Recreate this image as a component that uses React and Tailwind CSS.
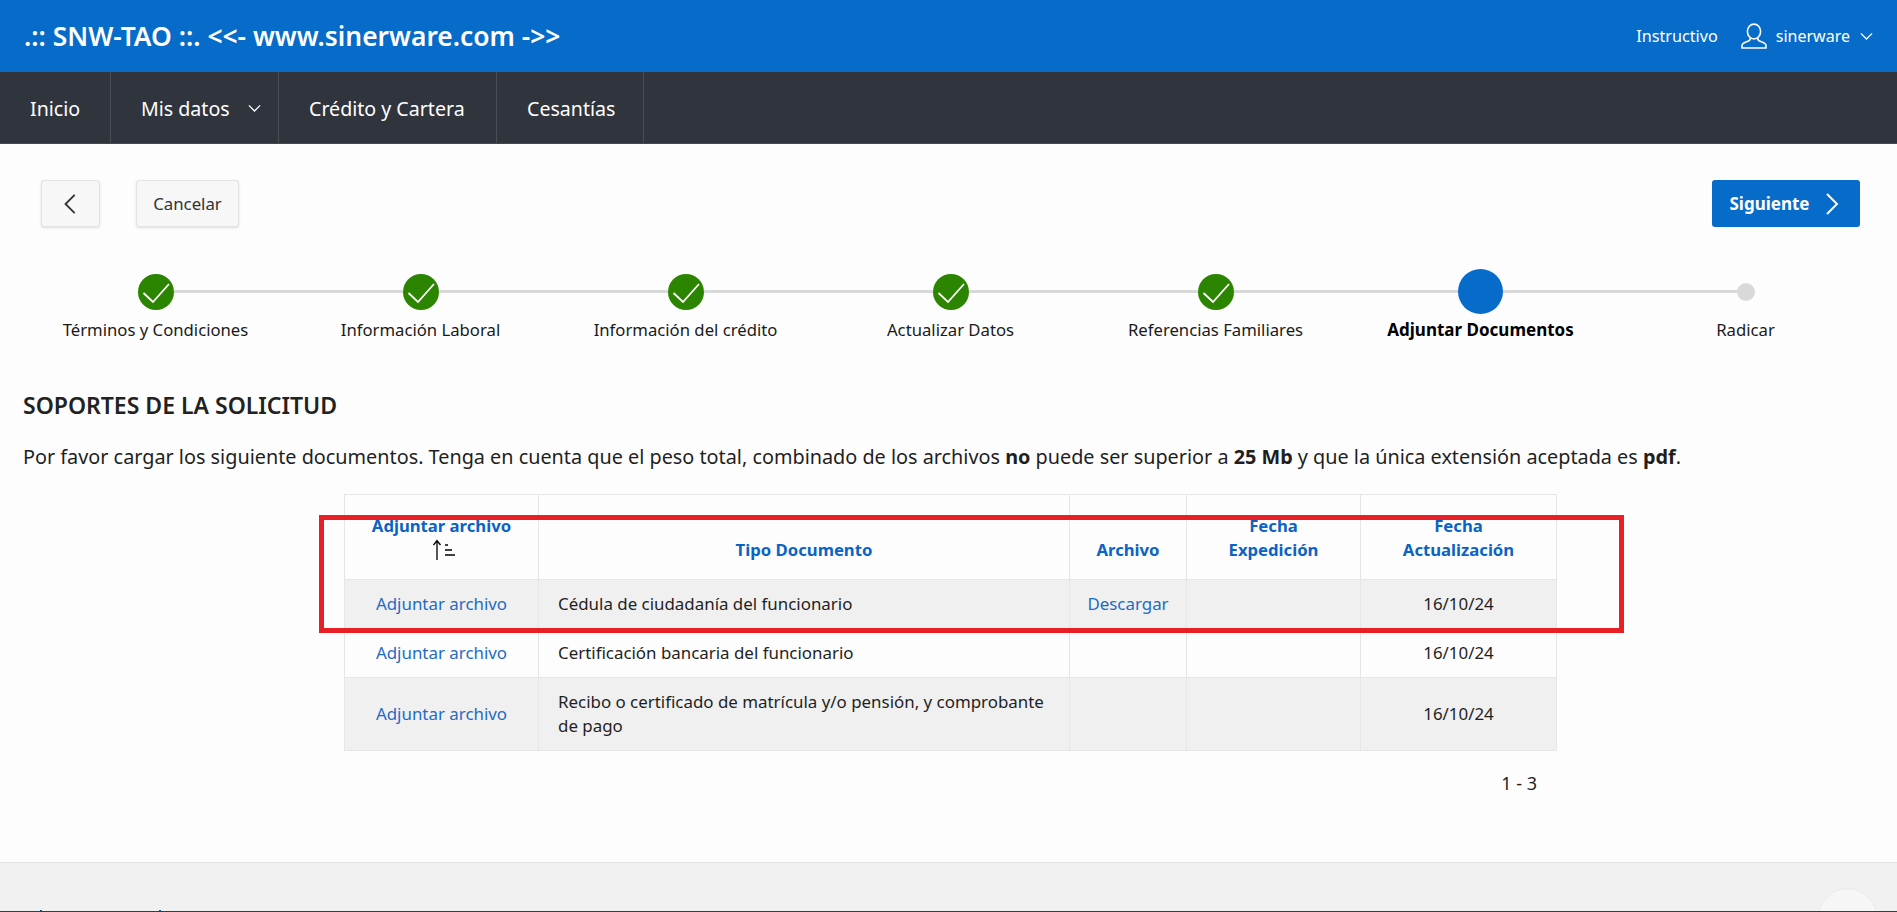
import React from 'react';

const steps = [
  { label: 'Términos y Condiciones', state: 'done' },
  { label: 'Información Laboral', state: 'done' },
  { label: 'Información del crédito', state: 'done' },
  { label: 'Actualizar Datos', state: 'done' },
  { label: 'Referencias Familiares', state: 'done' },
  { label: 'Adjuntar Documentos', state: 'current' },
  { label: 'Radicar', state: 'todo' },
];

const rows = [
  { tipo: 'Cédula de ciudadanía del funcionario', archivo: 'Descargar', striped: true },
  { tipo: 'Certificación bancaria del funcionario', archivo: '', striped: false },
  { tipo: 'Recibo o certificado de matrícula y/o pensión, y comprobante de pago', archivo: '', striped: true },
];

const navItems = [
  { label: 'Inicio', width: 'w-[111px]' },
  { label: 'Mis datos', width: 'w-[168px]' },
  { label: 'Crédito y Cartera', width: 'w-[218px]' },
  { label: 'Cesantías', width: 'w-[147px]' },
];

const Chevron = ({ dir = 'down', className }) => {
  const paths = {
    down: 'M3 7l9 9 9-9',
    left: 'M16 2L6 12l10 10',
    right: 'M8 2l10 10L8 22',
  };
  return (
    <svg viewBox="0 0 24 24" fill="none" stroke="currentColor" strokeWidth="2" className={className}>
      <path d={paths[dir]} />
    </svg>
  );
};

const UserIcon = () => (
  <svg viewBox="0 0 26 26" fill="none" stroke="currentColor" strokeWidth="1.6" className="w-[26px] h-[26px]">
    <ellipse cx="13" cy="8.5" rx="6.6" ry="7.4" />
    <path d="M9.3 14.8c.3 2-1 3-3 3.8C3.5 19.700 1 20.500 1 22.500v2.500h24v-2.500c0-2-2.500-2.800-5.300-3.900-2-.8-3.300-1.800-3-3.800" />
  </svg>
);

const SortIcon = () => (
  <svg viewBox="0 0 26 22" className="w-[26px] h-[22px] ml-[2px] text-black" fill="none" stroke="currentColor">
    <path d="M7 21V2M3.500 6L7 1.500 10.500 6" strokeWidth="1.300" />
    <path d="M15 6h3M15 11h7M15 16h10" strokeWidth="1.300" />
  </svg>
);

const Step = ({ step, index }) => {
  const lineLeft = index === 0 ? 'bg-transparent' : 'bg-[#d9d9d9]';
  const lineRight = index === steps.length - 1 ? 'bg-transparent' : 'bg-[#d9d9d9]';
  return (
    <div className="w-[265px] flex flex-col items-center -translate-x-[1px]">
      <div className="w-full h-[45px] flex items-center">
        <div className={`flex-1 h-[3px] ${lineLeft}`} />
        {step.state === 'done' && (
          <div className="w-[36px] h-[36px] rounded-full bg-[#2b8500] text-white">
            <svg viewBox="0 0 36 36" fill="none" stroke="currentColor" strokeWidth="1.800" className="w-full h-full">
              <path d="M5.500 19l9.500 9L31 10" />
            </svg>
          </div>
        )}
        {step.state === 'current' && <div className="w-[45px] h-[45px] rounded-full bg-[#076bc9]" />}
        {step.state === 'todo' && <div className="w-[18px] h-[18px] rounded-full bg-[#d9d9d9]" />}
        <div className={`flex-1 h-[3px] ${lineRight}`} />
      </div>
      <div className={`mt-[4px] leading-[24px] whitespace-nowrap ${step.state === 'current' ? 'text-[17px] font-bold text-black' : 'text-[16.7px] text-[#1a1a1a]'}`}>
        {step.label}
      </div>
    </div>
  );
};

const HeaderCell = ({ children }) => (
  <th className="border border-[#e6e6e6] align-bottom px-1 pb-[17px] text-[16.7px] leading-[24px] font-bold text-[#0b63c4] text-center">
    {children}
  </th>
);

const App = () => {
  return (
    <div className="h-[912px] w-full flex flex-col overflow-hidden bg-[#fdfdfd] text-[#1f1f1f]" style={{ fontFamily: '"Noto Sans", sans-serif' }}>
      <header className="h-[72px] shrink-0 bg-[#076bc9] text-white flex items-center justify-between pl-[24px] pr-[23px]">
        <div className="text-[26.4px] font-semibold pt-[1px] whitespace-nowrap">.:: SNW-TAO ::. &lt;&lt;- www.sinerware.com -&gt;&gt;</div>
        <div className="flex items-center">
          <span className="text-[16.2px] mr-[23px]">Instructivo</span>
          <UserIcon />
          <span className="text-[16px] ml-[9px] mr-[9px]">sinerware</span>
          <Chevron className="w-[15px] h-[15px]" />
        </div>
      </header>

      <nav className="h-[72px] shrink-0 bg-[#30343c] text-white flex border-b border-[#45484f]">
        {navItems.map((item) => (
          <a key={item.label} className={`${item.width} flex items-center pl-[30px] pt-[2px] border-r border-[#4a4d54] text-[19.6px] whitespace-nowrap`}>
            {item.label}
            {item.label === 'Mis datos' && <Chevron className="w-[15px] h-[15px] ml-[17px]" />}
          </a>
        ))}
      </nav>

      <div className="flex items-center justify-between pl-[41px] pr-[37px] mt-[36px]">
        <div className="flex gap-[36px]">
          <button className="w-[59px] h-[47px] flex items-center justify-center rounded-[3px] border border-[#e3e3e3] bg-[#f7f7f7] shadow-sm text-[#333]">
            <Chevron dir="left" className="w-[22px] h-[22px]" />
          </button>
          <button className="w-[103px] h-[47px] rounded-[3px] border border-[#e3e3e3] bg-[#f7f7f7] shadow-sm text-[16.8px] text-[#333]">
            Cancelar
          </button>
        </div>
        <button className="w-[148px] h-[47px] flex items-center justify-center gap-[9px] rounded-[3px] bg-[#076bc9] text-white text-[17px] font-bold">
          Siguiente
          <Chevron dir="right" className="w-[24px] h-[24px]" />
        </button>
      </div>

      <div className="flex pl-[24px] mt-[42px]">
        {steps.map((step, index) => (
          <Step key={step.label} step={step} index={index} />
        ))}
      </div>

      <h2 className="pl-[23px] mt-[47px] text-[23px] leading-[32px] font-semibold text-[#222]">SOPORTES DE LA SOLICITUD</h2>
      <p className="pl-[23px] mt-[22px] text-[19.82px] leading-[28px] whitespace-nowrap">
        Por favor cargar los siguiente documentos. Tenga en cuenta que el peso total, combinado de los archivos <b>no</b> puede ser superior a <b>25 Mb</b> y que la única extensión aceptada es <b>pdf</b>.
      </p>

      <div className="relative ml-[344px] w-[1212px] mt-[23px]">
        <table className="w-full table-fixed border-collapse text-[16.9px] leading-[24px]">
          <colgroup>
            <col className="w-[194px]" />
            <col className="w-[531px]" />
            <col className="w-[117px]" />
            <col className="w-[174px]" />
            <col className="w-[196px]" />
          </colgroup>
          <thead>
            <tr className="h-[85px]">
              <HeaderCell>
                Adjuntar archivo
                <div className="flex justify-center h-[24px] items-center"><SortIcon /></div>
              </HeaderCell>
              <HeaderCell>Tipo Documento</HeaderCell>
              <HeaderCell>Archivo</HeaderCell>
              <HeaderCell>Fecha<br />Expedición</HeaderCell>
              <HeaderCell>Fecha<br />Actualización</HeaderCell>
            </tr>
          </thead>
          <tbody>
            {rows.map((row) => (
              <tr key={row.tipo} className={row.striped ? 'bg-[#f0f0f0]' : ''}>
                <td className="border border-[#e6e6e6] px-[10px] py-[12px] text-center text-[#1f6bc4]">Adjuntar archivo</td>
                <td className="border border-[#e6e6e6] px-[19px] py-[12px]">{row.tipo}</td>
                <td className="border border-[#e6e6e6] px-[10px] py-[12px] text-center text-[#1f6bc4]">{row.archivo}</td>
                <td className="border border-[#e6e6e6] px-[10px] py-[12px]" />
                <td className="border border-[#e6e6e6] px-[10px] py-[12px] text-center">16/10/24</td>
              </tr>
            ))}
          </tbody>
        </table>
        <div className="absolute left-[-25px] top-[21px] w-[1305px] h-[118px] border-[5px] border-[#e81f24] pointer-events-none" />
        <div className="flex justify-end pr-[19px] mt-[20px] text-[18px] leading-[24px]">1 - 3</div>
      </div>

      <footer className="relative flex-1 mt-[67px] overflow-hidden bg-[#f1f1f1] border-t border-[#e3e3e3] border-b border-b-[#3c3c3c]">
        <div className="absolute left-[40px] bottom-0 w-[2px] h-[1px] bg-[#1c5a8c]" />
        <div className="absolute left-[159px] bottom-0 w-[2px] h-[1px] bg-[#1c5a8c]" />
        <div className="absolute left-[1818px] top-[25px] w-[59px] h-[59px] rounded-full bg-[#f6f6f6] border border-[#e9e9e9]" />
      </footer>
    </div>
  );
};

export default App;
